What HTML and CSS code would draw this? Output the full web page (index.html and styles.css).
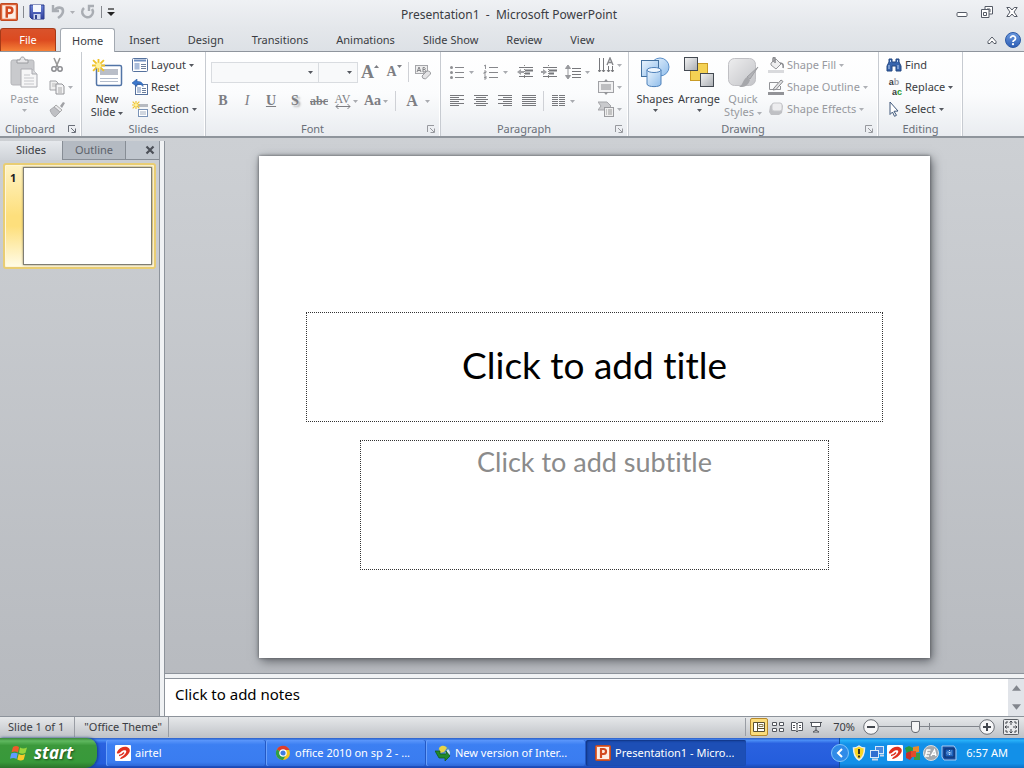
FILE: index.html
```html
<!DOCTYPE html>
<html lang="en">
<head>
<meta charset="utf-8">
<title>Presentation1 - Microsoft PowerPoint</title>
<link rel="stylesheet" href="styles.css">
</head>
<body>
<svg class="defs" aria-hidden="true">
  <defs>
    <linearGradient id="gBlue" x1="0" y1="0" x2="1" y2="1"><stop offset="0" stop-color="#eaf4fd"/><stop offset="1" stop-color="#8fbdeb"/></linearGradient>
    <linearGradient id="gGrey" x1="0" y1="0" x2="1" y2="1"><stop offset="0" stop-color="#f4f4f4"/><stop offset="1" stop-color="#a9adb2"/></linearGradient>
    <linearGradient id="gPale" x1="0" y1="0" x2="1" y2="1"><stop offset="0" stop-color="#eeeeef"/><stop offset="1" stop-color="#c3c4c8"/></linearGradient>
    <linearGradient id="gSave" x1="0" y1="0" x2="0" y2="1"><stop offset="0" stop-color="#6f86d8"/><stop offset="1" stop-color="#2f3f9c"/></linearGradient>
    <linearGradient id="gHelp" x1="0" y1="0" x2="0" y2="1"><stop offset="0" stop-color="#6d9be0"/><stop offset="1" stop-color="#2c5db4"/></linearGradient>
  </defs>
  <symbol id="ppt" viewBox="0 0 16 16"><rect x=".5" y=".5" width="15" height="15" rx="1" fill="#e2673b" stroke="#c04a22"/><rect x="2" y="2" width="12" height="12" fill="#fdeee4"/><path d="M6 13V4h2.500a2.400 2.400 0 0 1 0 5H6" fill="none" stroke="#d2491f" stroke-width="2.200"/></symbol>
  <symbol id="arrow" viewBox="0 0 5 3"><path d="M0 0h5L2.500 3z" fill="currentColor"/></symbol>
  <symbol id="launch" viewBox="0 0 8 8"><path d="M.5 7V.5H7" fill="none" stroke="currentColor"/><path d="M3 3l4 4M7.500 3.500v4h-4" fill="none" stroke="currentColor"/></symbol>
  <symbol id="burst" viewBox="0 0 12 12"><path d="M6 0v12M0 6h12M1 1l10 10M11 1L1 11" stroke="#efc22a" stroke-width="1.700"/><circle cx="6" cy="6" r="2.500" fill="#fff29a"/></symbol>
  <symbol id="airtel" viewBox="0 0 16 16"><rect width="16" height="16" rx="1" fill="#fff"/><path d="M2 7C4 2.500 9 1 12 2c4 1.500 3.500 5.500 0 8.500-2 2-5 3.500-6.500 3.500C4 13 8 11.500 10 9c2.500-3 1-4.500-2-3.500C6 6.500 5 8 3.500 8.500 2.500 8.800 1.500 8.500 2 7z" fill="#e0301f"/><path d="M4 10.500c2 0 3.500-1 5-3" fill="none" stroke="#e0301f" stroke-width="1.400"/></symbol>
</svg>

<div class="app">
  <header class="titlebar">
    <div class="quick">
      <svg class="i18" viewBox="0 0 16 16"><use href="#ppt"/></svg>
      <span class="bar"></span>
      <button aria-label="Save"><svg class="i16" viewBox="0 0 16 16"><path d="M1 1h14v14H3l-2-2z" fill="url(#gSave)" stroke="#2d3c8c"/><rect x="4" y="1" width="8" height="7" fill="#f6f8fd"/><rect x="4.500" y="10" width="7" height="5" fill="#cdd6ee"/><rect x="6" y="11" width="2" height="4" fill="#34448f"/></svg></button>
      <button class="dim" aria-label="Undo"><svg class="i16" viewBox="0 0 16 16"><path d="M3 1v6h6" fill="none" stroke="#a9adb3" stroke-width="2.400"/><path d="M4 7c3-5 9-4 9 0 0 3-2 5-5 7" fill="none" stroke="#a9adb3" stroke-width="2.600"/></svg><svg class="arr"><use href="#arrow"/></svg></button>
      <button class="dim" aria-label="Repeat"><svg class="i16" viewBox="0 0 16 16"><path d="M4 4a5.300 5.300 0 1 0 8 1" fill="none" stroke="#a9adb3" stroke-width="2.600"/><path d="M14 2H9v5" fill="none" stroke="#a9adb3" stroke-width="2.400"/></svg></button>
      <span class="bar"></span>
      <button aria-label="Customize Quick Access Toolbar"><svg class="i8" viewBox="0 0 8 8"><path d="M1 1h6" stroke="#222" stroke-width="1.200"/><path d="M0 4h8L4 8z" fill="#222"/></svg></button>
    </div>
    <h1 class="caption">Presentation1 &nbsp;-&nbsp; Microsoft PowerPoint</h1>
    <div class="winbtns">
      <button aria-label="Minimize"><svg class="i12" viewBox="0 0 12 12"><rect x="1" y="6.500" width="10" height="4" rx="1" fill="#fff" stroke="#555b66"/></svg></button>
      <button aria-label="Restore"><svg class="i12" viewBox="0 0 12 12"><path d="M4 .5h7.500V8H4z" fill="#fff" stroke="#555b66"/><path d="M6 3h3v3" fill="none" stroke="#555b66"/><path d="M.5 3.500H8v8H.5z" fill="#fff" stroke="#555b66"/><path d="M2.500 6.500h3v3h-3z" fill="none" stroke="#555b66"/></svg></button>
      <button aria-label="Close"><svg class="i12" viewBox="0 0 12 12"><path d="M.8 1.500h3L6 4l2.200-2.500h3L8 6l3.200 4.500h-3L6 8l-2.200 2.500h-3L4 6z" fill="#fff" stroke="#555b66"/></svg></button>
    </div>
  </header>

  <nav class="tabs">
    <button class="file">File</button>
    <button class="tab active">Home</button>
    <button class="tab">Insert</button>
    <button class="tab">Design</button>
    <button class="tab">Transitions</button>
    <button class="tab">Animations</button>
    <button class="tab">Slide Show</button>
    <button class="tab">Review</button>
    <button class="tab">View</button>
    <div class="tabend">
      <button aria-label="Minimize the Ribbon"><svg class="i10" viewBox="0 0 10 10"><path d="M1 6.500L5 2l4 4.500v2H7L5 6 3 8.500H1z" fill="#fff" stroke="#555b66"/></svg></button>
      <button aria-label="Help" class="help"><svg class="i16" viewBox="0 0 16 16"><circle cx="8" cy="8" r="7.500" fill="url(#gHelp)" stroke="#2c59a5"/><path d="M5.500 6.200a2.500 2.300 0 1 1 3.800 2C8.300 8.700 8 9 8 10" fill="none" stroke="#fff" stroke-width="1.800"/><circle cx="8" cy="12.200" r="1.100" fill="#fff"/></svg></button>
    </div>
  </nav>

  <section class="ribbon">
    <div class="group g-clip">
      <div class="body">
        <button class="big dim"><svg class="i32" viewBox="0 0 32 32"><rect x="2" y="4" width="23" height="25" rx="2" fill="#c9cacd" stroke="#b4b5b9"/><path d="M8 7V4h3c0-4 5-4 5 0h3v3z" fill="#e6e6e8" stroke="#9a9b9f"/><path d="M12 13h11l5 5v13H12z" fill="#f6f6f7" stroke="#aaabb0"/><path d="M23 13v5h5" fill="#dcdde0" stroke="#aaabb0"/><path d="M15 19h6M15 22h10M15 25h10M15 28h10" stroke="#c5c6ca"/></svg><span>Paste</span><svg class="arr"><use href="#arrow"/></svg></button>
        <div class="col">
          <button class="row dim" aria-label="Cut"><svg class="i16" viewBox="0 0 16 16"><path d="M5 1l4 9M11 1L7 10" stroke="#999" stroke-width="1.600"/><circle cx="5" cy="12" r="2.200" fill="none" stroke="#8b8c90" stroke-width="1.500"/><circle cx="11" cy="12" r="2.200" fill="none" stroke="#8b8c90" stroke-width="1.500"/></svg></button>
          <button class="row dim" aria-label="Copy"><svg class="i16" viewBox="0 0 16 16"><path d="M1 2h6l2 2v7H1z" fill="#eee" stroke="#a2a3a7"/><path d="M3 5h4M3 7h4" stroke="#bbb"/><path d="M7 5h6l2 2v8H7z" fill="#f3f3f4" stroke="#929397"/><path d="M9 9h4M9 11h4M9 13h4" stroke="#aaa"/></svg><svg class="arr"><use href="#arrow"/></svg></button>
          <button class="row dim" aria-label="Format Painter"><svg class="i16" viewBox="0 0 16 16"><path d="M11 5l3-4 2 1-3 5z" fill="#a0a1a5"/><path d="M7 4l6 5-2 2-6-5z" fill="#e8e8ea" stroke="#aaa"/><path d="M5 6l6 5-5 5c-2-1-4-4-5-7z" fill="#bfc0c4" stroke="#a9aaae"/></svg></button>
        </div>
      </div>
      <div class="label"><span>Clipboard</span><button aria-label="Clipboard options"><svg class="i8"><use href="#launch"/></svg></button></div>
    </div>

    <div class="group g-slides">
      <div class="body">
        <button class="big"><svg class="i32" viewBox="0 0 32 32"><rect x="5.500" y="9.500" width="25" height="20" rx="1.500" fill="#fff" stroke="#5274a6" stroke-width="1.500"/><rect x="9" y="13" width="18" height="6" fill="#b9bec8"/><path d="M9 22.500h18M9 25.500h18" stroke="#b3bccb"/><svg x="1" y="3" width="13" height="13"><use href="#burst"/></svg></svg><span>New<br>Slide <svg class="arr"><use href="#arrow"/></svg></span></button>
        <div class="col">
          <button class="row"><svg class="i16" viewBox="0 0 16 16"><rect x=".5" y="1.500" width="15" height="13" rx="1" fill="#fff" stroke="#55719d"/><path d="M2 3.500h12" stroke="#6e8fc0" stroke-width="2"/><rect x="2.500" y="6" width="5" height="6.500" fill="#a9bcda"/><path d="M9 7.500h5M9 9.500h5M9 11.500h5" stroke="#6c7f9d"/></svg>Layout<svg class="arr"><use href="#arrow"/></svg></button>
          <button class="row"><svg class="i16" viewBox="0 0 16 16"><rect x="3.500" y="5.500" width="12" height="10" fill="#fff" stroke="#55719d"/><rect x="5" y="8" width="4" height="6" fill="#b4c3da"/><path d="M10 9.500h4M10 11.500h4M10 13.500h4" stroke="#6c7f9d"/><path d="M0 4l5-4v2.500c4 0 6 1 6 5-1-2-3-2.500-6-2.500v2.500z" fill="#3c78cc" stroke="#2a5aa4" stroke-width=".6"/></svg>Reset</button>
          <button class="row"><svg class="i16" viewBox="0 0 16 16"><rect x="6" y="3" width="10" height="3" fill="#b6bac1"/><rect x="6.500" y="8.500" width="9" height="7" fill="#fff" stroke="#7a93b7"/><path d="M8 11h6M8 13h6" stroke="#a2aec0"/><svg width="8" height="8"><use href="#burst"/></svg></svg>Section<svg class="arr"><use href="#arrow"/></svg></button>
        </div>
      </div>
      <div class="label"><span>Slides</span></div>
    </div>

    <div class="group g-font">
      <div class="body stack">
        <div class="tools">
          <div class="combo face"><input aria-label="Font" type="text"><svg class="arr"><use href="#arrow"/></svg></div>
          <div class="combo size"><input aria-label="Font size" type="text"><svg class="arr"><use href="#arrow"/></svg></div>
          <button class="t serif f18" aria-label="Grow Font">A<svg class="tip" viewBox="0 0 5 3"><path d="M0 3h5L2.500 0z" fill="currentColor"/></svg></button>
          <button class="t serif f14" aria-label="Shrink Font">A<svg class="tip"><use href="#arrow"/></svg></button>
          <span class="sep thin"></span>
          <button class="t" aria-label="Clear All Formatting"><svg class="i16" viewBox="0 0 16 16"><rect x=".5" y="1.500" width="12" height="8" fill="#eee" stroke="#a5a6aa"/><path d="M2 8l2-5 2 5M3 6.500h2M8 8V3.500h1.500q1.500 1 0 2H8h2q1.500 1 0 2.500z" fill="none" stroke="#85868a"/><path d="M7 12l5-5q4 0 3.500 3l-5 5Q7 15 7 12z" fill="#e3e3e5" stroke="#9c9da1"/></svg></button>
        </div>
        <div class="tools">
          <button class="t serif"><b>B</b></button>
          <button class="t serif"><i>I</i></button>
          <button class="t serif"><u>U</u></button>
          <button class="t serif shade">S</button>
          <button class="t serif f12"><s>abc</s></button>
          <button class="t wide serif f12" aria-label="Character Spacing"><span class="av">AV<svg class="under" viewBox="0 0 16 5"><path d="M1 2.500h14M3.500 0L1 2.500 3.500 5M12.500 0L15 2.500 12.500 5" fill="none" stroke="currentColor"/></svg></span><svg class="arr"><use href="#arrow"/></svg></button>
          <button class="t wide serif">Aa<svg class="arr"><use href="#arrow"/></svg></button>
          <span class="sep"></span>
          <button class="t color serif f16">A<svg class="arr"><use href="#arrow"/></svg></button>
        </div>
      </div>
      <div class="label"><span>Font</span><button class="dim" aria-label="Font options"><svg class="i8"><use href="#launch"/></svg></button></div>
    </div>

    <div class="group g-para">
      <div class="body">
        <div class="stack">
          <div class="tools">
            <button class="t list" aria-label="Bullets"><svg class="i16" viewBox="0 0 16 16"><path d="M6 3.500h9M6 8.500h9M6 13.500h9" stroke="#86878b"/><circle cx="2.500" cy="3.500" r="1.500" fill="#8e8f93"/><circle cx="2.500" cy="8.500" r="1.500" fill="#8e8f93"/><circle cx="2.500" cy="13.500" r="1.500" fill="#8e8f93"/></svg><svg class="arr"><use href="#arrow"/></svg></button>
            <button class="t list" aria-label="Numbering"><svg class="i16" viewBox="0 0 16 16"><path d="M6 3.500h9M6 8.500h9M6 13.500h9" stroke="#86878b"/><path d="M1 2l1.500-1v4M1 7h2v1.500H1V10h2M1 12h2v3H1M1 13.500h2" fill="none" stroke="#929397"/></svg><svg class="arr"><use href="#arrow"/></svg></button>
            <button class="t" aria-label="Decrease List Level"><svg class="i16" viewBox="0 0 16 16"><path d="M2 3.500h14M2 12.500h14" stroke="#77787c"/><path d="M8 6.500h8M8 9.500h5" stroke="#77787c" stroke-width="2"/><path d="M0 8l4-3v2h3v2H4v2z" fill="#a0a1a5"/><path d="M7.500 1v14" stroke="#888" stroke-dasharray="1 1"/></svg></button>
            <button class="t" aria-label="Increase List Level"><svg class="i16" viewBox="0 0 16 16"><path d="M2 3.500h14M2 12.500h14" stroke="#77787c"/><path d="M8 6.500h8M8 9.500h5" stroke="#77787c" stroke-width="2"/><path d="M6 8L2 5v2H0v2h2v2z" fill="#a0a1a5"/><path d="M7.500 1v14" stroke="#888" stroke-dasharray="1 1"/></svg></button>
            <button class="t list" aria-label="Line Spacing"><svg class="i16" viewBox="0 0 16 16"><path d="M7 4.500h9M7 7.500h9M7 10.500h9M7 13.500h9" stroke="#77787c"/><path d="M3 2v12M.5 4.500L3 1l2.500 3.500zM.5 11.500L3 15l2.500-3.500z" fill="#98999d" stroke="#98999d"/></svg><svg class="arr"><use href="#arrow"/></svg></button>
          </div>
          <div class="tools">
            <button class="t" aria-label="Align Left"><svg class="i16" viewBox="0 0 16 16"><path d="M1 2.500h14M1 4.500h9M1 6.500h14M1 8.500h9M1 10.500h14M1 12.500h9" stroke="#77787c"/></svg></button>
            <button class="t" aria-label="Center"><svg class="i16" viewBox="0 0 16 16"><path d="M1 2.500h14M3 4.500h10M1 6.500h14M3 8.500h10M1 10.500h14M3 12.500h10" stroke="#77787c"/></svg></button>
            <button class="t" aria-label="Align Right"><svg class="i16" viewBox="0 0 16 16"><path d="M1 2.500h14M6 4.500h9M1 6.500h14M6 8.500h9M1 10.500h14M6 12.500h9" stroke="#77787c"/></svg></button>
            <button class="t" aria-label="Justify"><svg class="i16" viewBox="0 0 16 16"><path d="M1 2.500h14M1 4.500h14M1 6.500h14M1 8.500h14M1 10.500h14M1 12.500h14" stroke="#77787c"/></svg></button>
            <span class="sep thin"></span>
            <button class="t list" aria-label="Columns"><svg class="i16" viewBox="0 0 16 16"><path d="M2 2.500h6M9 2.500h6M2 4.500h6M9 4.500h6M2 6.500h6M9 6.500h6M2 8.500h6M9 8.500h6M2 10.500h6M9 10.500h6M2 12.500h6M9 12.500h6" stroke="#77787c"/></svg><svg class="arr"><use href="#arrow"/></svg></button>
          </div>
        </div>
        <div class="col">
          <button class="row dim" aria-label="Text Direction"><svg class="i16" viewBox="0 0 16 16"><path d="M1.500 1v14M5.500 1v14M10.500 9v6M14.500 9v6M0 13l1.500 2L3 13M4 13l1.500 2L7 13M9 13l1.500 2 1.500-2M13 13l1.500 2 1.500-2" fill="none" stroke="#77787c"/><path d="M9 8l3-7 3 7M10 5.500h4" fill="none" stroke="#85868a" stroke-width="1.400"/></svg><svg class="arr"><use href="#arrow"/></svg></button>
          <button class="row dim" aria-label="Align Text"><svg class="i16" viewBox="0 0 16 16"><rect x=".5" y="2.500" width="15" height="11" fill="#f1f1f2" stroke="#a0a1a5"/><path d="M3 6h10M3 8h10M3 10h10" stroke="#898a8e"/><path d="M5.500 3L8 0l2.500 3zM5.500 13L8 16l2.500-3z" fill="#949599"/></svg><svg class="arr"><use href="#arrow"/></svg></button>
          <button class="row dim" aria-label="Convert to SmartArt"><svg class="i16" viewBox="0 0 16 16"><path d="M0 1h9l4 4-4 4H0l3-4z" fill="#c9cacd" stroke="#a5a6aa"/><rect x="6.500" y="6.500" width="9" height="9" fill="#eee" stroke="#9a9b9f"/><path d="M8 9h1M8 11h1M8 13h1M10 9h4M10 11h4M10 13h4" stroke="#999"/></svg><svg class="arr"><use href="#arrow"/></svg></button>
        </div>
      </div>
      <div class="label"><span>Paragraph</span><button class="dim" aria-label="Paragraph options"><svg class="i8"><use href="#launch"/></svg></button></div>
    </div>

    <div class="group g-draw">
      <div class="body">
        <button class="big"><svg class="i32" viewBox="0 0 32 32"><circle cx="21" cy="11" r="9" fill="url(#gBlue)" stroke="#5b8fc9"/><rect x="2.500" y="4.500" width="17" height="16" fill="url(#gBlue)" stroke="#44719f"/><path d="M8 14v14c0 3.500 14 3.500 14 0V14z" fill="url(#gBlue)" stroke="#4f81ba"/><ellipse cx="15" cy="14" rx="7" ry="2.500" fill="#eef6fe" stroke="#4f81ba"/></svg><span>Shapes</span><svg class="arr"><use href="#arrow"/></svg></button>
        <button class="big"><svg class="i32" viewBox="0 0 32 32"><rect x="7.500" y="7.500" width="17" height="17" fill="#f4d254" stroke="#c99b26"/><rect x="1.500" y="1.500" width="13" height="13" fill="url(#gGrey)" stroke="#444a52"/><rect x="17.500" y="17.500" width="13" height="13" fill="url(#gGrey)" stroke="#444a52"/></svg><span>Arrange</span><svg class="arr"><use href="#arrow"/></svg></button>
        <button class="big dim"><svg class="i32" viewBox="0 0 32 32"><rect x="1.500" y="2.500" width="27" height="27" rx="6" fill="url(#gPale)" stroke="#c0c0c4"/><path d="M31 11l-8 12-3-2z" fill="#b3b4b8" stroke="#9d9ea2"/><path d="M20 21l3 3c-2 7-7 7-11 7 4-2 4-8 8-10z" fill="#a6a7ab"/></svg><span>Quick<br>Styles <svg class="arr"><use href="#arrow"/></svg></span></button>
        <div class="col">
          <button class="row dim"><svg class="i16" viewBox="0 0 16 16"><path d="M3 6l5-4 5 5-5 5-5-4z" fill="#efeff0" stroke="#96979b"/><path d="M7 6V1q-2-1-2 1v3M12 6q4 0 3 5" fill="none" stroke="#88898d" stroke-width="1.500"/><path d="M0 14.500h16" stroke="#d9dadd" stroke-width="3"/></svg>Shape Fill<svg class="arr"><use href="#arrow"/></svg></button>
          <button class="row dim"><svg class="i16" viewBox="0 0 16 16"><path d="M10 3.500H1.500v7h11V7" fill="none" stroke="#929397"/><path d="M6 9l7-8 2 1.500-7 8-3 .5z" fill="#e2e2e4" stroke="#88898d"/><path d="M0 14.500h16" stroke="#929397" stroke-width="3"/></svg>Shape Outline<svg class="arr"><use href="#arrow"/></svg></button>
          <button class="row dim"><svg class="i16" viewBox="0 0 16 16"><path d="M5 2h8l2 3-1 7-3 2H3l-2-3 1-6z" fill="#bfc0c4"/><rect x="4" y="2" width="10" height="8" rx="2" fill="#ededef" stroke="#c7c8cb"/></svg>Shape Effects<svg class="arr"><use href="#arrow"/></svg></button>
        </div>
      </div>
      <div class="label"><span>Drawing</span><button class="dim" aria-label="Drawing options"><svg class="i8"><use href="#launch"/></svg></button></div>
    </div>

    <div class="group g-edit">
      <div class="body">
        <div class="col">
          <button class="row"><svg class="i16" viewBox="0 0 16 16"><path d="M3 2h3v3h4V2h3v3l2 4v5h-5V9H6v5H1V9l2-4z" fill="#3764ac" stroke="#234680"/><path d="M3 8v4M12 8v4M4.500 3v2M11.500 3v2" stroke="#b9d0f2"/></svg>Find</button>
          <button class="row"><span class="swap"><span>a<i>b</i></span><span class="two">a<em>c</em></span></span>Replace<svg class="arr"><use href="#arrow"/></svg></button>
          <button class="row"><svg class="i16" viewBox="0 0 16 16"><path d="M4 1l8 9-4 .3 2.500 4-2 1-2-4.300L4 13.500z" fill="#fff" stroke="#3e5679"/></svg>Select<svg class="arr"><use href="#arrow"/></svg></button>
        </div>
      </div>
      <div class="label"><span>Editing</span></div>
    </div>
  </section>

  <main class="work">
    <aside class="side">
      <div class="sidetabs">
        <button class="on">Slides</button>
        <button class="off">Outline</button>
        <button class="x" aria-label="Close pane"><svg class="i10" viewBox="0 0 10 10"><path d="M1.500 1.500l7 7M8.500 1.500l-7 7" stroke="#4c5058" stroke-width="2.200"/></svg></button>
      </div>
      <div class="thumb"><span class="num">1</span><div class="mini"></div></div>
    </aside>
    <div class="vsplit"></div>
    <div class="right">
      <div class="canvas">
        <article class="slide">
          <h2 class="ph title">Click to add title</h2>
          <p class="ph sub">Click to add subtitle</p>
        </article>
      </div>
      <div class="hsplit"></div>
      <div class="notes">
        <textarea aria-label="Notes" placeholder="Click to add notes"></textarea>
        <div class="scroll"><svg class="sa" viewBox="0 0 10 6"><path d="M0 6h10L5 0z" fill="#82868d"/></svg><svg class="sa" viewBox="0 0 10 6"><path d="M0 0h10L5 6z" fill="#82868d"/></svg></div>
      </div>
    </div>
  </main>

  <footer class="status">
    <span class="cell first">Slide 1 of 1</span>
    <span class="cell">"Office Theme"</span>
    <div class="views">
      <button class="sel" aria-label="Normal"><svg class="i12" viewBox="0 0 12 12"><path d="M.5 1.500h11v9H.5zM4.500 1.500v9M4.500 7.500h7" fill="#fff" stroke="#5b5130"/><path d="M6 5.500h4v-2H6z" fill="none" stroke="#8a7d4e"/></svg></button>
      <button aria-label="Slide Sorter"><svg class="i12" viewBox="0 0 12 12"><path d="M.5 1.500h4v3h-4zM7.500 1.500h4v3h-4zM.5 7.500h4v3h-4zM7.500 7.500h4v3h-4z" fill="#fff" stroke="#52565d"/></svg></button>
      <button aria-label="Reading View"><svg class="i12" viewBox="0 0 12 12"><path d="M.5 1.500h4L6 3l1.500-1.500h4v8h-4L6 11 4.500 9.500h-4zM6 3v8" fill="#fff" stroke="#52565d"/><path d="M2 4.500h2M2 6.500h2M8 4.500h2M8 6.500h2" stroke="#52565d"/></svg></button>
      <button aria-label="Slide Show"><svg class="i12" viewBox="0 0 12 12"><path d="M0 1.500h12M1.500 1.500v4h9v-4M6 6v4M3 11l3-2 3 2z" fill="#fff" stroke="#52565d"/></svg></button>
    </div>
    <span class="pct">70%</span>
    <button class="zb" aria-label="Zoom out"><svg class="i16" viewBox="0 0 16 16"><circle cx="8" cy="8" r="7.300" fill="#f7f7f8" stroke="#6a6e75"/><path d="M4 8h8" stroke="#44484f" stroke-width="2"/></svg></button>
    <input class="zoom" type="range" min="0" max="100" value="35" aria-label="Zoom">
    <button class="zb" aria-label="Zoom in"><svg class="i16" viewBox="0 0 16 16"><circle cx="8" cy="8" r="7.300" fill="#f7f7f8" stroke="#6a6e75"/><path d="M4 8h8M8 4v8" stroke="#44484f" stroke-width="2"/></svg></button>
    <button class="fit" aria-label="Fit slide to window"><svg class="i16" viewBox="0 0 16 16"><rect x=".5" y=".5" width="15" height="15" rx="1" fill="#e9eaec" stroke="#5a5e65"/><path d="M8 2v4M8 10v4M2 8h4M10 8h4M6.500 3.500L8 2l1.500 1.500M6.500 12.500L8 14l1.500-1.500M3.500 6.500L2 8l1.500 1.500M12.500 6.500L14 8l-1.500 1.500M3 3h2M3 3v2M13 3h-2M13 3v2M3 13h2M3 13v-2M13 13h-2M13 13v-2" fill="none" stroke="#42464d"/></svg></button>
  </footer>

  <div class="taskbar">
    <button class="start"><svg class="flag" viewBox="0 0 18 18"><path d="M3 3q3-2 6 0L8 8.500q-3-2-6.500-.2z" fill="#ef5b2b"/><path d="M10 3.500q3 2 7 0l-1.500 5.300q-3 2-6.500 0z" fill="#9ad63d"/><path d="M1.200 9.500q3-1.500 6.500 0L6.500 15q-3-1.800-6.500-.2z" fill="#5f9bff"/><path d="M8.700 10q3 2 6.500 0l-1.400 5.500q-3 1.800-6.500 0z" fill="#fbc929"/></svg>start</button>
    <div class="tasks">
      <button class="task"><svg class="i16"><use href="#airtel"/></svg><span>airtel</span></button>
      <button class="task"><svg class="i16" viewBox="0 0 16 16"><circle cx="8" cy="8" r="7" fill="#f3c41d"/><path d="M8 8L1.900 4.500A7 7 0 0 1 14.500 5H8z" fill="#dc3d2c"/><path d="M8 8L1.900 4.500A7 7 0 0 0 8 15l3-5z" fill="#2f9e45"/><circle cx="8" cy="8" r="3.200" fill="#3f7be0" stroke="#fff" stroke-width="1.200"/></svg><span>office 2010 on sp 2 - ...</span></button>
      <button class="task"><svg class="i16" viewBox="0 0 16 16"><circle cx="9" cy="7" r="6.500" fill="#4b8dcf"/><path d="M4 3c3-4 7-2 8 0L9 7 5 8z" fill="#e8d447"/><path d="M13 4q4 4 0 8l-3-4z" fill="#d5e8f5"/><path d="M0 6h5v3h6V6l4 5-5 5v-3H4z" fill="#218a2b" stroke="#0f5418" stroke-width=".7"/></svg><span>New version of Inter...</span></button>
      <button class="task current"><svg class="i16"><use href="#ppt"/></svg><span>Presentation1 - Micro...</span></button>
    </div>
    <div class="tray">
      <button class="chev" aria-label="Show hidden icons"><svg class="i18" viewBox="0 0 18 18"><circle cx="9" cy="9" r="8.500" fill="#2f8be8" stroke="#83c5f8"/><path d="M11 5L7 9l4 4" fill="none" stroke="#fff" stroke-width="2"/></svg></button>
      <svg class="i16" viewBox="0 0 16 16"><path d="M8 1q3 2 5.500 2c0 6-2 10-5.500 12C4.500 13 2.500 9 2.500 3 5 3 8 1 8 1z" fill="#f8d624" stroke="#e9edf0" stroke-width="1.500"/><path d="M8 4v5M8 10.500v2" stroke="#222" stroke-width="1.800"/></svg>
      <svg class="i16" viewBox="0 0 16 16"><rect x="6.500" y="1.500" width="8" height="7" fill="#4a8ade" stroke="#d7e8f8"/><rect x="1.500" y="5.500" width="8" height="7" fill="#2f6fd0" stroke="#d7e8f8"/><path d="M3 14.500h6M11 10.500h4" stroke="#c8d8ec" stroke-width="2"/></svg>
      <svg class="i16"><use href="#airtel"/></svg>
      <svg class="i16" viewBox="0 0 16 16"><path d="M0 3l4-2 4 2-1 5-5 1z" fill="#2b9a3c"/><path d="M8 2l6-1v6l-6 1z" fill="#e88a2c"/><path d="M1 8l5-2 2 5-3 4-4-2z" fill="#c4302b"/><path d="M9 8h6v7H9z" fill="#3c9b45"/><path d="M6 6h5v6H6z" fill="#e14b2a"/></svg>
      <svg class="i16" viewBox="0 0 16 16"><circle cx="8" cy="8" r="7.500" fill="#a5a9ae" stroke="#d9dcdf"/><path d="M7.500 5H4L2.500 11H6M3.500 8H7M8 11l3.500-6 1.500 6M9.500 9.200h3" fill="none" stroke="#fff" stroke-width="1.400"/></svg>
      <svg class="i16" viewBox="0 0 16 16"><path d="M1 1h12l2 3v11H3L1 12z" fill="#174d9c" stroke="#a7cbf3"/><rect x="4" y="4" width="9" height="8" fill="#1d62bc" stroke="#0c2d68"/><path d="M8.500 5v6M5.500 8h6M6.500 6l4 4M10.500 6l-4 4" stroke="#bfe0ff" stroke-dasharray="1 1"/></svg>
      <time>6:57 AM</time>
    </div>
  </div>
</div>
</body>
</html>
```
FILE: styles.css
```css
* { box-sizing: border-box; }
body { margin: 0; font: 11px/14px "Noto Sans", "Open Sans", sans-serif; color: #3a3c42; }
button { font: inherit; color: inherit; background: none; border: 0; padding: 0; margin: 0; white-space: nowrap; }
h1, h2, p { margin: 0; font-weight: 400; }
svg { flex: none; display: block; }
.defs { position: absolute; width: 0; height: 0; }
.i8 { width: 8px; height: 8px; }
.i10 { width: 10px; height: 10px; }
.i12 { width: 12px; height: 12px; }
.i16 { width: 16px; height: 16px; }
.i18 { width: 18px; height: 18px; }
.i32 { width: 32px; height: 32px; }
.arr { width: 5px; height: 3px; display: inline-block; vertical-align: middle; color: #55585f; }
.dim { color: #97999e; }
.dim .arr { color: #aeb0b5; }
.app { display: flex; flex-direction: column; height: 100vh; overflow: hidden; background: #e3e6ea; }

.titlebar { flex: none; height: 28px; display: grid; grid-template-columns: 1fr auto 1fr; align-items: center; background: linear-gradient(#eff1f4, #e4e7eb); padding: 0 6px 4px 0; }
.quick { display: flex; align-items: center; gap: 5px; }
.quick button { display: flex; align-items: center; gap: 4px; }
.bar { width: 1px; height: 12px; background: #85888e; }
.caption { font-size: 12px; line-height: 16px; padding-top: 5px; }
.winbtns { display: flex; justify-content: flex-end; gap: 13px; }

.tabs { flex: none; height: 24px; display: flex; background: linear-gradient(#e4e7eb, #dde1e6); border-bottom: 1px solid #8f959d; }
.file { width: 56px; color: #fff; background: linear-gradient(#d9532c, #dc4a20 50%, #f58037); border: 1px solid #a63a18; border-bottom: 0; border-radius: 3px 3px 0 0; margin-right: 4px; }
.tab { padding: 0 14px; border: 1px solid transparent; border-width: 1px 0; }
.tab.active { padding: 0 11px; background: #fff; border: 1px solid #a3a9b1; border-bottom: 0; border-radius: 3px 3px 0 0; margin-bottom: -1px; }
.tabend { margin-left: auto; display: flex; align-items: center; gap: 8px; padding-right: 3px; }

.ribbon { flex: none; height: 86px; display: flex; background: linear-gradient(#fff, #fbfcfd 50%, #e9ecf0); border-bottom: 2px solid #8f959c; }
.group { flex: none; display: flex; flex-direction: column; border-right: 1px solid #c7cbd1; box-shadow: inset -1px 0 #fff; }
.body { height: 70px; padding-top: 2px; display: flex; }
.label { height: 14px; display: flex; align-items: center; color: #6a6f79; }
.label span { flex: 1; text-align: center; }
.label button { margin: 0 5px 0 8px; }
.g-clip { width: 82px; }
.g-slides { width: 124px; }
.g-font { width: 235px; }
.g-para { width: 188px; }
.g-draw { width: 250px; }
.g-edit { width: 84px; }
.col { display: flex; flex-direction: column; }
.row { height: 22px; display: flex; align-items: center; gap: 3px; }
.big { display: flex; flex-direction: column; align-items: center; padding-top: 2px; line-height: 13px; }
.big .i32 { margin-bottom: 4px; }
.big > .arr { margin-top: 4px; }
.g-clip .big { width: 49px; }
.g-slides .big { width: 50px; }
.g-draw .body { padding-left: 4px; }
.g-draw .big { width: 44px; }
.g-draw .big + .col { margin-left: 3px; }
.g-edit .body { padding-left: 7px; }

.stack { display: flex; flex-direction: column; gap: 7px; }
.body.stack { padding: 9px 0 0 5px; }
.g-para .stack { padding: 7px 0 0 4px; width: 157px; }
.tools { display: flex; align-items: center; height: 22px; }
.combo { display: flex; align-items: center; height: 21px; border: 1px solid #d9dce0; background: #f8f9fa; padding-right: 5px; }
.combo input { flex: 1; min-width: 0; border: 0; background: none; font: inherit; padding: 0 3px; }
.face { width: 108px; }
.size { width: 39px; border-left: 0; }
.t { width: 24px; height: 22px; display: flex; align-items: center; justify-content: center; color: #7d7e83; }
.t .arr { color: #a9abb0; margin-left: 2px; }
.wide { width: 30px; }
.list { width: 34px; justify-content: flex-start; padding-left: 4px; }
.list .arr { margin-left: 4px; }
.color { width: 36px; }
.color .arr { margin-left: 7px; }
.serif { font-family: "Liberation Serif", serif; font-weight: 700; font-size: 14px; }
.serif i { font-weight: 400; }
.f12 { font-size: 12px; }
.f14 { font-size: 14px; }
.f16 { font-size: 16px; }
.f18 { font-size: 18px; }
.shade { text-shadow: 2px 2px 2px #aaa; }
.tip { width: 5px; height: 3px; align-self: flex-start; margin-top: 4px; }
.av { display: flex; flex-direction: column; align-items: center; line-height: 10px; font-weight: 400; }
.under { width: 16px; height: 5px; }
.sep { width: 1px; height: 20px; background: #cfd1d6; margin: 0 4px; }
.thin { margin: 0 2px; }
.swap { width: 16px; font: 700 9px/10px "Liberation Sans", sans-serif; display: flex; flex-direction: column; }
.swap i { color: #a0a2a7; font-style: normal; }
.swap .two { align-self: flex-end; }
.swap em { color: #1d9a2b; font-style: normal; }

.work { flex: 1; min-height: 0; display: flex; background: linear-gradient(#cdd0d4, #b6b9be); padding-top: 3px; }
.side { width: 159px; flex: none; }
.sidetabs { display: flex; height: 19px; border-bottom: 1px solid #878d95; line-height: 16px; }
.sidetabs button { border-right: 1px solid #878d95; }
.sidetabs .on { width: 63px; margin-bottom: -1px; padding-bottom: 2px; background: linear-gradient(#e6e9ed, #cfd3d8); }
.sidetabs .off { width: 63px; background: #b4bac2; color: #5d626b; }
.sidetabs .x { flex: 1; display: flex; align-items: center; justify-content: flex-end; background: #c0c6ce; border-right: 0; padding-right: 4px; }
.thumb { margin: 3px 3px 0; height: 106px; border: 2px solid #e9cd73; border-radius: 3px; background: linear-gradient(#fff3c4, #fddf7c 50%, #fddf7c 60%, #fffce8); display: flex; padding: 2px 2px 2px 5px; box-shadow: inset 0 0 0 1px #fff6d8; }
.num { width: 13px; padding-top: 4px; font-weight: 700; color: #222; }
.mini { flex: 1; background: #fff; border: 1px solid #7f7d74; box-shadow: 0 0 2px #8a8158; }
.vsplit { width: 6px; background: #f0f2f4; border: 1px solid #8d939b; border-width: 0 1px; }
.right { flex: 1; min-width: 0; display: flex; flex-direction: column; }
.canvas { flex: 1; min-height: 0; display: flex; align-items: center; justify-content: center; }
.slide { width: 78%; aspect-ratio: 4 / 3; background: #fff; display: flex; flex-direction: column; align-items: center; padding-top: 156px; box-shadow: 0 0 3px #55585c, 2px 3px 10px #5f6267; }
.ph { border: 1px dotted #333; font-family: Lato, sans-serif; font-variant-ligatures: none; text-align: center; }
.title { width: 86%; height: 110px; display: flex; align-items: center; justify-content: center; padding-bottom: 4px; font-size: 37px; line-height: 44px; color: #000; }
.sub { width: 70%; height: 130px; margin-top: 18px; padding-top: 5px; font-size: 27px; line-height: 32px; color: #8b8b8b; }
.hsplit { height: 6px; background: #f0f2f4; border: 1px solid #8d939b; border-width: 1px 0; }
.notes { height: 37px; display: flex; background: #fff; }
.notes textarea { flex: 1; border: 0; resize: none; outline: 0; overflow: hidden; padding: 5px 10px; font: 15px/20px "Noto Sans", sans-serif; }
.notes textarea::placeholder { color: #000; opacity: 1; }
.scroll { width: 16px; background: #e1e4e9; display: flex; flex-direction: column; justify-content: space-between; align-items: center; padding: 6px 0; }
.sa { width: 9px; height: 6px; }

.status { flex: none; height: 22px; display: flex; align-items: center; border-top: 1px solid #8d939b; background: linear-gradient(#e6e8ea, #bfc2c7); padding: 0 5px 2px 0; }
.cell { line-height: 20px; padding: 0 9px; border-right: 1px solid #999da4; }
.cell + .cell { padding-right: 6px; }
.first { padding: 0 10px 0 8px; }
.views { margin-left: auto; display: flex; gap: 1px; border-left: 1px solid #999da4; padding-left: 4px; }
.views button { width: 18px; height: 18px; display: flex; align-items: center; justify-content: center; }
.views .sel { background: #fbdc7b; border: 1px solid #b8892b; border-radius: 2px; }
.pct { width: 38px; text-align: center; }
.zoom { appearance: none; width: 100px; height: 18px; margin: 0; background: linear-gradient(#80848b, #80848b) center / 100% 1px no-repeat, linear-gradient(#80848b, #80848b) center / 1px 7px no-repeat; }
.zoom::-webkit-slider-thumb { appearance: none; width: 9px; height: 12px; background: #f5f5f6; border: 1px solid #63676e; border-radius: 1px 1px 5px 5px; }
.fit { margin-left: 8px; }

.taskbar { flex: none; height: 30px; display: flex; background: linear-gradient(#2c5fc8, #4a8df5 8%, #2a62e0 18%, #245ddc 85%, #1b47b0); color: #fff; }
.start { width: 97px; display: flex; align-items: center; gap: 6px; padding-left: 10px; font: italic 700 17px/20px "Open Sans", sans-serif; text-shadow: 1px 1px 2px #1c4d1c; background: linear-gradient(#3c873c, #5fb85f 10%, #3b993b 25%, #38993a 80%, #2b742b); border-radius: 0 10px 12px 0; box-shadow: 1px 0 3px #143a80; }
.flag { width: 18px; height: 18px; }
.tasks { flex: 1; min-width: 0; display: flex; padding: 2px 0 2px 9px; }
.task { flex: 0 1 160px; min-width: 0; display: flex; align-items: center; gap: 4px; padding: 0 9px; border-radius: 2px; background: linear-gradient(#5c97fb, #3c7ff2 18%, #3a7cf0 85%, #2e68d8); box-shadow: inset 1px 0 #6ba1fb, inset -1px 0 #2458c4; }
.task span { overflow: hidden; text-overflow: ellipsis; }
.task.current { background: #1d4fb6; box-shadow: inset 1px 1px 2px #0f337f; }
.tray { flex: none; display: flex; align-items: center; gap: 2px; padding-right: 16px; background: linear-gradient(#1f7fd8, #27b0f8 8%, #1290e8 20%, #1290e8 85%, #0d6fc4); border-left: 1px solid #0f4d9c; }
.chev { margin-left: -9px; }
.tray time { padding-left: 7px; }
```
